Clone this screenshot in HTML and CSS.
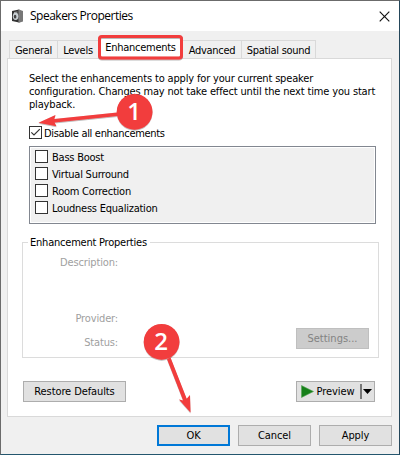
FILE: index.html
```html
<!DOCTYPE html>
<html lang="en">
<head>
<meta charset="utf-8">
<title>Speakers Properties</title>
<link rel="stylesheet" href="styles.css">
</head>
<body>
<main class="window">
  <header class="titlebar">
    <svg class="app-icon" width="14" height="16" viewBox="0 0 14 16">
      <path d="M1 2 8 .5V13.5L1 12z" fill="#333"/>
      <path d="M8 .5 12 2V12.5L8 13.8z" fill="#777"/>
      <path d="M8 .5V13.8" stroke="#888"/>
      <ellipse cx="4.6" cy="7.3" rx="2.8" ry="3.8" fill="#c9d0d4"/>
      <ellipse cx="4.1" cy="7.7" rx="1.3" ry="1.9" fill="#444"/>
      <path d="M3 3.5 6.5 3" stroke="#aaa"/>
    </svg>
    <h1 class="title">Speakers Properties</h1>
    <svg class="close" width="11" height="11" viewBox="0 0 11 11"><path d="M.7 .7 10.3 10.3M10.3 .7 .7 10.3" stroke="#111" stroke-width="1.15"/></svg>
  </header>
  <nav class="tabs">
    <div class="tab general"><span>General</span></div>
    <div class="tab levels"><span>Levels</span></div>
    <div class="tab selected"><span>Enhancements</span></div>
    <div class="tab advanced"><span>Advanced</span></div>
    <div class="tab spatial"><span>Spatial sound</span></div>
  </nav>
  <section class="panel">
    <p class="intro"><span>Select the enhancements to apply for your current speaker</span><br><span>configuration. Changes may not take effect until the next time you start</span><br><span>playback.</span></p>
    <div class="check-row master"><i class="box"><svg width="11" height="11" viewBox="0 0 11 11"><path d="M1.3 5.3 4 8 9.8 2.2" fill="none" stroke="#333" stroke-width="1.2"/></svg></i><span>Disable all enhancements</span></div>
    <div class="list">
      <div class="check-row"><i class="box"></i><span>Bass Boost</span></div>
      <div class="check-row"><i class="box"></i><span>Virtual Surround</span></div>
      <div class="check-row"><i class="box"></i><span>Room Correction</span></div>
      <div class="check-row"><i class="box"></i><span>Loudness Equalization</span></div>
    </div>
    <fieldset class="group">
      <legend><span>Enhancement Properties</span></legend>
      <div class="label desc"><span>Description:</span></div>
      <div class="label prov"><span>Provider:</span></div>
      <div class="status-row"><div class="label status"><span>Status:</span></div><button class="btn disabled"><span>Settings...</span></button></div>
    </fieldset>
    <div class="actions">
      <button class="btn restore"><span>Restore Defaults</span></button>
      <button class="btn preview">
        <svg width="13" height="13" viewBox="0 0 13 13"><path d="M.5 .5 12.5 6.5 .5 12.5z" fill="#17801a" stroke="#56a556" stroke-width=".6"/></svg>
        <span>Preview</span><i class="split"></i>
        <svg width="9" height="5" viewBox="0 0 9 5"><path d="M0 0H9L4.5 5z"/></svg>
      </button>
    </div>
  </section>
  <footer class="footer">
    <button class="btn ok"><span>OK</span></button>
    <button class="btn"><span>Cancel</span></button>
    <button class="btn"><span>Apply</span></button>
  </footer>
</main>
<svg class="annotations" width="400" height="455" viewBox="0 0 400 455">
  <defs><filter id="shadow" x="-20%" y="-20%" width="140%" height="140%"><feDropShadow dx="0" dy=".6" stdDeviation=".7" flood-opacity=".45"/></filter></defs>
  <g fill="#f23c3d" filter="url(#shadow)">
    <rect x="99.5" y="36.5" width="82" height="21.5" rx="2.5" fill="none" stroke="#f23c3d" stroke-width="3"/>
    <path d="M38.5 122.7 55.5 115 54.2 118.9 122 111.9 122 115.4 54.5 122.4 56.5 126.3z"/>
    <path d="M190.5 412.5 179 399.5 183.2 400.5 167 359 170.5 357.5 186.7 398.7 190 395z"/>
    <circle cx="134.6" cy="111.8" r="17.9"/>
    <circle cx="161.6" cy="341.8" r="17.9"/>
  </g>
  <g class="numbers"><text x="134" y="120">1</text><text x="161" y="350">2</text></g>
</svg>
</body>
</html>
```
FILE: styles.css
```css
* { box-sizing: border-box; }
body { margin: 0; width: 400px; height: 455px; overflow: hidden; background: #fff; color: #000; font: 11px/13px "DejaVu Sans Condensed", "DejaVu Sans", sans-serif; font-stretch: condensed; letter-spacing: -.1px; }
span { white-space: nowrap; }
.window { width: 400px; height: 455px; display: flex; flex-direction: column; background: #f0f0f0; border: 1px solid #6b6b6b; border-right-color: #24465a; border-bottom-color: #24566e; }
.titlebar { height: 30px; flex: none; display: flex; align-items: center; background: #fff; padding: 0 10px; }
.app-icon { margin-top: 1px; }
.title { flex: 1; margin: 0 0 0 5px; font: 12px/16px "Open Sans", sans-serif; letter-spacing: -.5px; }
.close { margin-right: -1px; }
.tabs { display: flex; align-items: flex-end; height: 27px; flex: none; padding-left: 8px; letter-spacing: -.27px; }
.tab { height: 18px; border: 1px solid #d9d9d9; border-bottom: 0; border-left: 0; padding-top: 3px; text-align: center; }
.general { width: 49px; border-left: 1px solid #d9d9d9; }
.levels { width: 41px; }
.selected { width: 84px; height: 21px; background: #fff; }
.advanced { width: 59px; }
.spatial { width: 74px; }
.panel { flex: none; width: 385px; height: 359px; margin-left: 6px; border: 1px solid #d9d9d9; background: #fff; padding: 13px 11px 0 14px; }
.intro { margin: 0 0 0 7px; height: 39px; letter-spacing: -.16px; }
.check-row { display: flex; align-items: center; height: 13px; gap: 4px; }
.check-row span { padding-top: 2px; }
.box { width: 13px; height: 13px; flex: none; border: 1px solid #333; background: #fff; }
.box svg { display: block; }
.master { margin: 15px 0 0 7px; gap: 2px; letter-spacing: -.31px; }
.list { margin: 7px 0 0 7px; width: 347px; height: 78px; border: 1px solid #828790; padding: 3px 5px; background: #f0f0f0; box-shadow: inset 0 0 0 1px #fff; display: flex; flex-direction: column; gap: 4px; letter-spacing: -.23px; }
.group { margin: 12px 0 0; padding: 0; width: 357px; height: 122px; border: 1px solid #dcdcdc; }
legend { margin-left: 5px; padding: 0 3px 0 2px; height: 13px; letter-spacing: -.22px; }
.label { color: #a0a0a0; width: 95px; text-align: right; letter-spacing: -.15px; }
.desc { margin-top: 7px; }
.prov { margin-top: 43px; }
.status-row { display: flex; justify-content: space-between; align-items: center; padding-right: 9px; margin-top: 3px; }
.status { padding-top: 7px; }
.btn { width: 73px; height: 21px; padding: 0; border: 1px solid #adadad; background: #e1e1e1; color: #000; font: inherit; letter-spacing: inherit; text-align: center; }
.btn.disabled { background: #ccc; border-color: #bfbfbf; color: #838383; letter-spacing: 0; }
.actions { display: flex; justify-content: space-between; width: 352px; margin: 23px 0 0 1px; }
.restore { width: 103px; }
.preview { width: 79px; display: flex; align-items: center; padding-left: 4px; gap: 1px; }
.preview span { width: 41px; }
.split { width: 2px; height: 15px; background: #777; margin-left: 3px; }
.footer { display: flex; justify-content: flex-end; gap: 8px; padding: 8px 7px 0 0; }
.ok { border: 2px solid #0078d7; }
.annotations { position: absolute; left: 0; top: 0; }
.numbers { fill: #fff; font: 600 24px "Open Sans", sans-serif; letter-spacing: 0; text-anchor: middle; }
```
